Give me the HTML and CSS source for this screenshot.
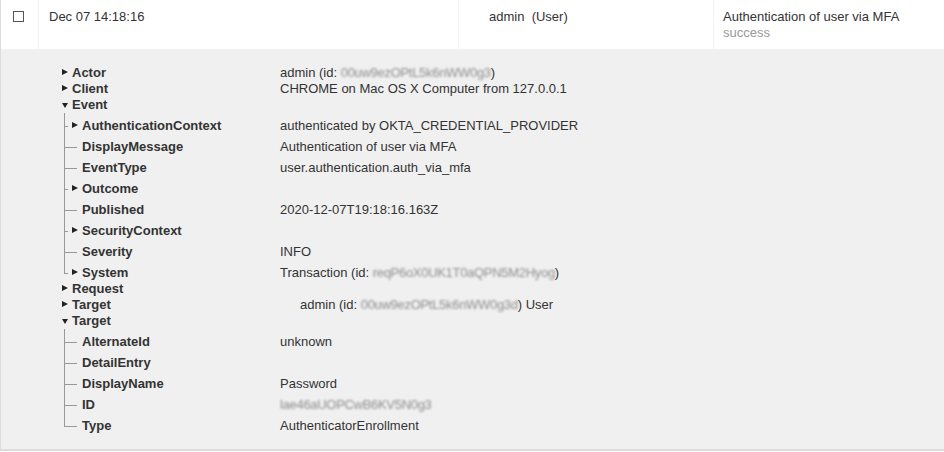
FILE: index.html
```html
<!DOCTYPE html>
<html>
<head>
<meta charset="utf-8">
<link rel="stylesheet" href="styles.css">
</head>
<body>
<div class="log">
  <div class="summary">
    <div class="cell c-check"><span class="checkbox"></span></div>
    <div class="cell c-date">Dec 07 14:18:16</div>
    <div class="cell c-actor">admin&nbsp; (User)</div>
    <div class="cell c-event">
      <div>Authentication of user via MFA</div>
      <div class="status">success</div>
    </div>
  </div>
  <div class="detail">
    <div class="line"><span class="lead closed"></span><span class="k">Actor</span><span class="v">admin (id: <span class="blur">00uw9ezOPtL5k6nWW0g3</span>)</span></div>
    <div class="line"><span class="lead closed"></span><span class="k">Client</span><span class="v">CHROME on Mac OS X Computer from 127.0.0.1</span></div>
    <div class="line"><span class="lead open"></span><span class="k">Event</span></div>
    <div class="kids">
      <div class="kid"><span class="lead exp"></span><span class="k">AuthenticationContext</span><span class="v">authenticated by OKTA_CREDENTIAL_PROVIDER</span></div>
      <div class="kid"><span class="lead leaf"></span><span class="k">DisplayMessage</span><span class="v">Authentication of user via MFA</span></div>
      <div class="kid"><span class="lead leaf"></span><span class="k">EventType</span><span class="v">user.authentication.auth_via_mfa</span></div>
      <div class="kid"><span class="lead exp"></span><span class="k">Outcome</span></div>
      <div class="kid"><span class="lead leaf"></span><span class="k">Published</span><span class="v">2020-12-07T19:18:16.163Z</span></div>
      <div class="kid"><span class="lead exp"></span><span class="k">SecurityContext</span></div>
      <div class="kid"><span class="lead leaf"></span><span class="k">Severity</span><span class="v">INFO</span></div>
      <div class="kid"><span class="lead exp"></span><span class="k">System</span><span class="v">Transaction (id: <span class="blur">reqP6oX0UK1T0aQPN5M2Hyog</span>)</span></div>
    </div>
    <div class="line"><span class="lead closed"></span><span class="k">Request</span></div>
    <div class="line"><span class="lead closed"></span><span class="k">Target</span><span class="v indent">admin (id: <span class="blur">00uw9ezOPtL5k6nWW0g3d</span>) User</span></div>
    <div class="line"><span class="lead open"></span><span class="k">Target</span></div>
    <div class="kids">
      <div class="kid"><span class="lead leaf"></span><span class="k">AlternateId</span><span class="v">unknown</span></div>
      <div class="kid"><span class="lead leaf"></span><span class="k">DetailEntry</span></div>
      <div class="kid"><span class="lead leaf"></span><span class="k">DisplayName</span><span class="v">Password</span></div>
      <div class="kid"><span class="lead leaf"></span><span class="k">ID</span><span class="v"><span class="blur">lae46aUOPCwB6KV5N0g3</span></span></div>
      <div class="kid"><span class="lead leaf"></span><span class="k">Type</span><span class="v">AuthenticatorEnrollment</span></div>
    </div>
  </div>
</div>
</body>
</html>
```
FILE: styles.css
```css
body {
  margin: 0;
  background: #fff;
  color: #333;
  font-family: "Liberation Sans", Arial, Helvetica, sans-serif;
}

.log {
  width: 943px;
  border-left: 1px solid #dddddd;
  border-bottom: 2px solid #dcdcdc;
}

.summary {
  display: flex;
  height: 49px;
  font-size: 13px;
  line-height: 16px;
  color: #333;
}

.cell {
  box-sizing: border-box;
  border-right: 1px solid #f3f3f3;
  padding-top: 9px;
}

.c-check {
  width: 38px;
  padding: 11px 0 0 12px;
}

.checkbox {
  display: block;
  box-sizing: border-box;
  width: 11px;
  height: 11px;
  border: 1px solid #555;
}

.c-date {
  width: 420px;
  padding-left: 10px;
}

.c-actor {
  width: 255px;
  padding-left: 30px;
}

.c-event {
  flex: 1;
  padding-left: 9px;
  border-right: none;
}

.status {
  color: #999;
}

.detail {
  background: #f0f0f0;
  padding: 16px 0 15px 61px;
  font-size: 13px;
  line-height: 16px;
  color: #333;
}

.line {
  display: flex;
  height: 16px;
}

.lead {
  position: relative;
  flex: none;
  width: 10px;
  height: 16px;
}

.k {
  flex: none;
  width: 208px;
  font-weight: bold;
  color: #333;
}

.v {
  white-space: nowrap;
}

.v.indent {
  padding-left: 20px;
}

.blur {
  color: #8e8e8e;
  filter: blur(0.9px);
  letter-spacing: -0.3px;
}

.closed::before {
  content: "";
  position: absolute;
  left: 0;
  top: 4px;
  border-left: 6px solid #222;
  border-top: 3.5px solid transparent;
  border-bottom: 3.5px solid transparent;
}

.open::before {
  content: "";
  position: absolute;
  left: 0;
  top: 6px;
  border-top: 5px solid #222;
  border-left: 3.5px solid transparent;
  border-right: 3.5px solid transparent;
}

.kids {
  margin-left: 2px;
}

.kid {
  position: relative;
  display: flex;
  height: 16px;
  padding-top: 5px;
}

.kid::before {
  content: "";
  position: absolute;
  left: 0;
  top: 0;
  bottom: 0;
  width: 1px;
  background: #999;
}

.kid:last-child::before {
  bottom: auto;
  height: 13px;
}

.kid .lead {
  width: 18px;
  position: static;
}

.kid .k {
  width: 198px;
}

.leaf::before {
  content: "";
  position: absolute;
  left: 0;
  top: 13px;
  width: 13px;
  height: 1px;
  background: #999;
}

.exp::before {
  content: "";
  position: absolute;
  left: 0;
  top: 13px;
  width: 4px;
  height: 1px;
  background: #999;
}

.exp::after {
  content: "";
  position: absolute;
  left: 8px;
  top: 9px;
  border-left: 6px solid #222;
  border-top: 3.5px solid transparent;
  border-bottom: 3.5px solid transparent;
}
```
